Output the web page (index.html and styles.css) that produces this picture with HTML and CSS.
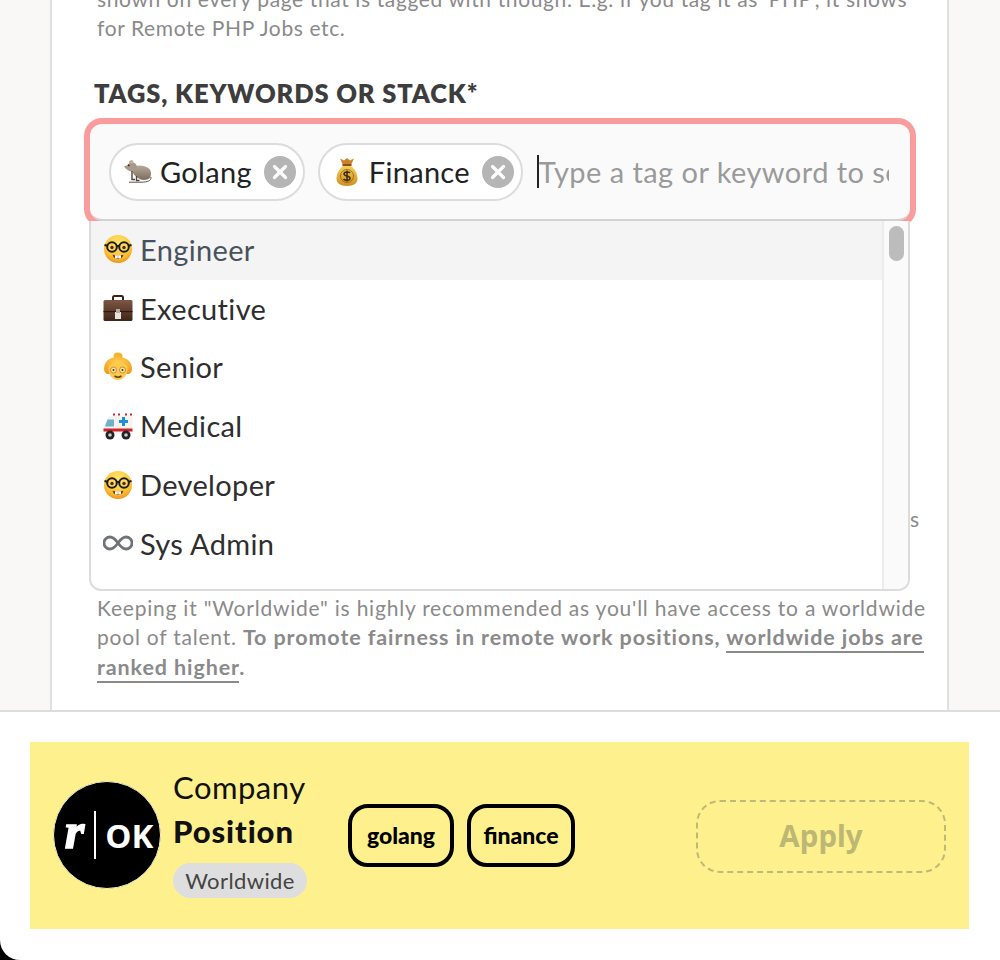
FILE: index.html
```html
<!DOCTYPE html>
<html lang="en">
<head>
<meta charset="utf-8">
<title>Post a job</title>
<link rel="stylesheet" href="styles.css">
</head>
<body>
<svg class="defs" width="0" height="0" aria-hidden="true">
  <defs>
    <radialGradient id="face" cx="50%" cy="30%" r="75%"><stop offset="0" stop-color="#ffe873"/><stop offset="0.65" stop-color="#fdc234"/><stop offset="1" stop-color="#ee8a14"/></radialGradient>
    <radialGradient id="hair" cx="50%" cy="30%" r="75%"><stop offset="0" stop-color="#ffd04f"/><stop offset="1" stop-color="#ee9a1c"/></radialGradient>
    <linearGradient id="case" x1="0" y1="0" x2="0" y2="1"><stop offset="0" stop-color="#7f5644"/><stop offset="1" stop-color="#3f2518"/></linearGradient>
    <linearGradient id="bag" x1="0" y1="0" x2="0" y2="1"><stop offset="0" stop-color="#f6cf5a"/><stop offset="1" stop-color="#cf8f1e"/></linearGradient>
    <linearGradient id="rat" x1="0" y1="0" x2="0" y2="1"><stop offset="0" stop-color="#b8aa98"/><stop offset="1" stop-color="#7a6e60"/></linearGradient>
    <symbol id="nerd" viewBox="0 0 30 30">
      <circle cx="15" cy="15" r="14" fill="url(#face)"/>
      <circle cx="9" cy="13" r="4.800" fill="#ffd75e" stroke="#1d1d1d" stroke-width="2"/>
      <circle cx="21" cy="13" r="4.800" fill="#ffd75e" stroke="#1d1d1d" stroke-width="2"/>
      <path d="M13.500 12h3M1.500 11l3 .8M28.500 11l-3 .8" stroke="#1d1d1d" stroke-width="2" fill="none"/>
      <circle cx="9" cy="13.500" r="1.700" fill="#4a2e12"/><circle cx="21" cy="13.500" r="1.700" fill="#4a2e12"/>
      <path d="M9.500 20.500c3 1.500 8 1.500 11 0c-1 3.500-3 4.500-5.500 4.500s-4.500-1-5.500-4.500z" fill="#6b3d14"/>
      <rect x="12" y="21.300" width="2.800" height="3.200" fill="#fff"/><rect x="15.200" y="21.300" width="2.800" height="3.200" fill="#fff"/>
    </symbol>
    <symbol id="briefcase" viewBox="0 0 30 30">
      <path d="M10 8V4.500c0-1 .7-1.500 1.500-1.500h7c.8 0 1.500.5 1.500 1.500V8" fill="none" stroke="#3b2418" stroke-width="2"/>
      <rect x="0.500" y="7" width="29" height="21" rx="1.500" fill="url(#case)"/>
      <rect x="0.500" y="18" width="29" height="1.200" fill="#2c190f"/>
      <rect x="12" y="19" width="6" height="7" fill="#e8e4df"/>
      <rect x="13" y="16" width="4" height="4" fill="#b9a999"/>
    </symbol>
    <symbol id="granny" viewBox="0 0 30 30">
      <ellipse cx="15" cy="4" rx="4.500" ry="3.500" fill="#f7b52d"/>
      <path d="M1 17C1 9 7 5 15 5s14 4 14 12c0 2-1 4-3 5H4c-2-1-3-3-3-5z" fill="url(#hair)"/>
      <path d="M5.500 17c0-5 4-6 9.500-6s9.500 1 9.500 6-3.500 11-9.500 11S5.500 22 5.500 17z" fill="#fdc94f"/>
      <circle cx="10.500" cy="18" r="3" fill="#ffe2a0" stroke="#b98b2b" stroke-width=".9"/>
      <circle cx="19.500" cy="18" r="3" fill="#ffe2a0" stroke="#b98b2b" stroke-width=".9"/>
      <circle cx="10.500" cy="18" r="1" fill="#4a2e12"/><circle cx="19.500" cy="18" r="1" fill="#4a2e12"/>
      <path d="M11.500 24c2 1.300 5 1.300 7 0" fill="none" stroke="#6d3d10" stroke-width="1.500"/>
    </symbol>
    <symbol id="ambulance" viewBox="0 0 30 30">
      <path d="M10 5h19.500v18H.5v-7l4-9c.5-1 1.500-2 3-2z" fill="#f5f3f0"/>
      <path d="M4.500 8.500h6.500v7H2z" fill="#6fb2c8"/>
      <path d="M.5 17.500h29v3H.5z" fill="#d2232a"/>
      <path d="M19 6h3v3h3v3h-3v3h-3v-3h-3V9h3z" fill="#1c8fd6"/>
      <rect x="10" y="2.500" width="2" height="2" fill="#d2232a"/><rect x="15" y="2.500" width="2" height="2" fill="#d2232a"/><rect x="22" y="2.500" width="2" height="2" fill="#d2232a"/><rect x="27" y="2.500" width="2" height="2" fill="#d2232a"/>
      <circle cx="7" cy="24" r="4.500" fill="#222"/><circle cx="7" cy="24" r="1.800" fill="#ccc"/>
      <circle cx="23" cy="24" r="4.500" fill="#222"/><circle cx="23" cy="24" r="1.800" fill="#ccc"/>
    </symbol>
    <symbol id="infinity" viewBox="0 0 30 30">
      <path d="M15 15c-2.500-3.500-4.500-6-8-6a6 6 0 0 0 0 12c3.500 0 5.500-2.500 8-6s4.500-6 8-6a6 6 0 0 1 0 12c-3.500 0-5.500-2.500-8-6z" fill="none" stroke="#6f7378" stroke-width="2.800"/>
    </symbol>
    <symbol id="ratmoji" viewBox="0 0 30 30">
      <path d="M15 21c3 2.500 9 2.500 12 0 1.500-3 1.500-7-1-9.500C22 8 16 8 12 9c-2 .5-3 4-2 7 1 2 3 3.500 5 5z" fill="url(#rat)"/>
      <path d="M1 9.500c2-.5 4-2 5.500-3.500l-.5-2 3 1c3 .5 5 2.500 5 5.500 0 2.500-2 4-4.500 4C7 14.500 3 13 1 9.500z" fill="#a89a88"/>
      <circle cx="8.500" cy="4.800" r="1.900" fill="#c9ab98"/>
      <circle cx="5.800" cy="8.300" r=".9" fill="#222"/>
      <path d="M9 14v8.500h3M13.500 19v4.500h3" fill="none" stroke="#4f463b" stroke-width="1.400"/>
      <path d="M28 20c.5 4-4 5-9 5.200H6" fill="none" stroke="#5e5347" stroke-width="1"/>
    </symbol>
    <symbol id="moneybag" viewBox="0 0 30 30">
      <path d="M8 1.500l4 2L15 1l3 2.500 4-2-3 6.500h-8z" fill="#c9812a"/>
      <rect x="10.500" y="7" width="9" height="2" fill="#8a4f18"/>
      <path d="M11 9C6 13 4.500 18 4.500 22c0 4 3.500 7 10.500 7s10.500-3 10.500-7c0-4-1.500-9-6.500-13z" fill="url(#bag)"/>
      <circle cx="15" cy="19" r="6.500" fill="none" stroke="#6a4510" stroke-width=".6"/>
      <path d="M18 16c-1-1.500-6-1.500-6 1s6 1.500 6 4.200-5 2.500-6.500.8M15 13.500v11" fill="none" stroke="#3f2a0c" stroke-width="1.500"/>
    </symbol>
    <symbol id="close" viewBox="0 0 32 32">
      <circle cx="16" cy="16" r="16" fill="#b5b5b5"/>
      <path d="M10.500 10.500l11 11M21.500 10.500l-11 11" stroke="#fff" stroke-width="3.200" stroke-linecap="round"/>
    </symbol>
  </defs>
</svg>

<div class="page">
  <main class="sheet">
    <p class="hint hint-top">shown on every page that is tagged with though. E.g. if you tag it as 'PHP', it shows for Remote PHP Jobs etc.</p>
    <h2 class="label">TAGS, KEYWORDS OR STACK*</h2>
    <div class="combo">
      <div class="tag-input">
        <span class="chip"><svg class="emoji-chip"><use href="#ratmoji"/></svg><span class="chip-text">Golang</span><svg class="chip-x"><use href="#close"/></svg></span>
        <span class="chip"><svg class="emoji-chip"><use href="#moneybag"/></svg><span class="chip-text">Finance</span><svg class="chip-x"><use href="#close"/></svg></span>
        <span class="field"><span class="caret"></span><span class="placeholder">Type a tag or keyword to search</span></span>
      </div>
      <div class="menu">
        <ul class="menu-list">
          <li class="menu-item active"><svg class="emoji"><use href="#nerd"/></svg>Engineer</li>
          <li class="menu-item"><svg class="emoji"><use href="#briefcase"/></svg>Executive</li>
          <li class="menu-item"><svg class="emoji"><use href="#granny"/></svg>Senior</li>
          <li class="menu-item"><svg class="emoji"><use href="#ambulance"/></svg>Medical</li>
          <li class="menu-item"><svg class="emoji"><use href="#nerd"/></svg>Developer</li>
          <li class="menu-item"><svg class="emoji"><use href="#infinity"/></svg>Sys Admin</li>
        </ul>
        <div class="scroll-track"><div class="scroll-thumb"></div></div>
      </div>
      <p class="under-note">s</p>
    </div>
    <p class="hint hint-bottom">Keeping it "Worldwide" is highly recommended as you'll have access to a worldwide pool of talent. <b>To promote fairness in remote work positions, <span class="link">worldwide jobs are ranked higher</span>.</b></p>
  </main>
  <div class="footer-wrap">
    <footer class="footer">
      <div class="preview">
        <div class="logo"><span class="logo-r">r</span><span class="logo-bar"></span><span class="logo-ok">OK</span></div>
        <div class="job">
          <div class="company">Company</div>
          <div class="position">Position</div>
          <span class="place">Worldwide</span>
        </div>
        <div class="job-tags">
          <span class="job-tag tag-golang">golang</span>
          <span class="job-tag tag-finance">finance</span>
        </div>
        <div class="apply">Apply</div>
      </div>
    </footer>
  </div>
</div>
</body>
</html>
```
FILE: styles.css
```css
* { box-sizing: border-box; }
html, body { margin: 0; padding: 0; }
body {
  width: 1000px;
  height: 960px;
  overflow: hidden;
  background: #faf8f6;
  font-family: "Lato", "Noto Sans", sans-serif;
}
.defs { display: block; height: 0; }
.page { height: 960px; display: flex; flex-direction: column; }
.sheet {
  height: 710px;
  flex: none;
  width: 899px;
  margin-left: 50px;
  background: #fff;
  border-left: 2px solid #e0e0e0;
  border-right: 2px solid #e0e0e0;
  overflow: hidden;
  padding: 0 19px 0 45px;
}
.hint {
  margin: 0;
  font-size: 21px;
  line-height: 29px;
  color: #8a8a8a;
  letter-spacing: 0.78px;
}
.hint-top { margin: -16px 3px 0 0; letter-spacing: 0.62px; }
.label {
  margin: 35px 0 0 -3px;
  font-size: 25.500px;
  line-height: 32px;
  font-weight: 800;
  color: #3d3d3d;
  letter-spacing: 0.87px;
}
.combo { position: relative; margin: 15px 0 0 -7px; width: 820px; }
.tag-input {
  height: 97px;
  display: flex;
  align-items: center;
  gap: 13px;
  padding: 0 21px 0 19px;
  background: #fafafa;
  border-radius: 12px;
  border-bottom: 2px solid #d2d2d2;
  box-shadow: 0 0 0 6px #fa9c9c;
  overflow: hidden;
}
.chip {
  flex: none;
  height: 58px;
  display: flex;
  align-items: center;
  padding: 0 7px 0 12px;
  border: 2px solid #dcdcdc;
  border-radius: 29px;
  background: #fff;
  font-size: 29px;
  color: #222;
}
.emoji-chip { width: 30px; height: 30px; margin-right: 7px; flex: none; }
.chip-text { letter-spacing: 0.3px; }
.chip-x { width: 32px; height: 32px; margin-left: 12px; flex: none; }
.field { flex: 1; min-width: 0; margin-left: 1px; display: flex; align-items: center; overflow: hidden; white-space: nowrap; }
.caret { flex: none; width: 2px; height: 33px; background: #222; }
.placeholder { font-size: 29px; letter-spacing: 0.45px; color: #9a9a9a; }
.menu {
  position: absolute;
  top: 97px;
  left: -1px;
  width: 821px;
  height: 370px;
  display: flex;
  background: #fff;
  border: 2px solid #dcdcdc;
  border-top: 0;
  border-radius: 0 0 12px 12px;
  overflow: hidden;
  z-index: 2;
}
.menu-list { list-style: none; margin: 0; padding: 0; flex: 1; min-width: 0; }
.menu-item {
  height: 58.800px;
  display: flex;
  align-items: center;
  padding: 0 0 2px 12px;
  font-size: 29px;
  letter-spacing: 0.35px;
  color: #2e2e2e;
}
.menu-item.active { background: #f4f4f4; color: #48525c; }
.emoji { width: 30px; height: 30px; margin-right: 7px; flex: none; }
.scroll-track { width: 26px; flex: none; background: #fafafa; border-left: 2px solid #ececec; padding: 5px 0 0 5px; }
.scroll-thumb { width: 15px; height: 35px; border-radius: 8px; background: #bcbcbc; }
.under-note {
  margin: 0 -9px 0 0;
  height: 372px;
  padding: 283px 0 0 0;
  text-align: right;
  font-size: 21px;
  line-height: 29px;
  color: #8a8a8a;
}
.hint b { font-weight: 700; font-size: 21.500px; letter-spacing: 0.9px; }
.link { border-bottom: 2px solid #8a8a8a; padding-bottom: 1px; }
.footer-wrap { flex: 1; background: linear-gradient(90deg, #000 50%, #fff 50%); }
.footer {
  height: 100%;
  background: #fff;
  border-top: 2px solid #dddddd;
  border-bottom-left-radius: 20px;
  padding: 30px 31px 0 30px;
}
.preview {
  height: 187px;
  background: #fef18d;
  display: flex;
  align-items: center;
  padding: 0 23px;
}
.logo {
  width: 108px;
  height: 108px;
  flex: none;
  margin-top: -1px;
  border-radius: 50%;
  background: #000;
  border: 1px solid #f5efc8;
  display: flex;
  align-items: center;
  justify-content: center;
  color: #fff;
  font-family: "Open Sans", sans-serif;
  font-weight: 700;
}
.logo-r { font: italic 900 50px/1 "Liberation Serif", serif; margin: -8px 10px 0 4px; -webkit-text-stroke: 1.500px #fff; }
.logo-bar { width: 2px; height: 48px; background: #fff; margin-right: 9px; }
.logo-ok { font-size: 33px; line-height: 1; }
.job { margin-left: 12px; width: 175px; flex: none; display: flex; flex-direction: column; align-items: flex-start; }
.company { font-size: 31px; line-height: 40px; color: #111; letter-spacing: 0.5px; margin-top: -6px; }
.position { font-size: 31px; line-height: 44px; font-weight: 900; color: #111; letter-spacing: 0.9px; margin-top: 2px; }
.place {
  margin-top: 10px;
  height: 35px;
  width: 134px;
  border-radius: 18px;
  background: #dedede;
  color: #444;
  font-size: 22px;
  line-height: 35px;
  text-align: center;
  letter-spacing: 0.4px;
}
.job-tags { display: flex; gap: 13px; flex: none; }
.job-tag {
  height: 63px;
  border: 4px solid #000;
  border-radius: 20px;
  text-align: center;
  font: 900 23px/55px "Lato", sans-serif;
  color: #000;
}
.tag-golang { width: 106px; }
.tag-finance { width: 108px; }
.apply {
  margin-left: auto;
  margin-top: 1px;
  width: 250px;
  height: 73px;
  border: 2px dashed #bfb979;
  border-radius: 24px;
  text-align: center;
  font: 700 29.500px/67px "Noto Sans", sans-serif;
  color: #bdb775;
}
```
